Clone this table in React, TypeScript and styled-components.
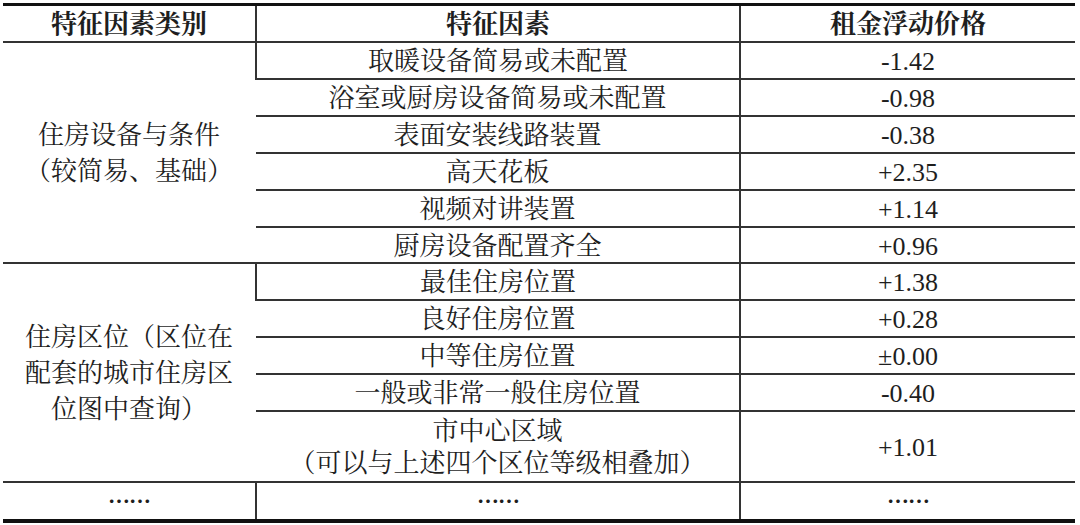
import React from "react";
import styled, { createGlobalStyle } from "styled-components";

const GlobalStyle = createGlobalStyle`
  html, body {
    margin: 0;
    padding: 0;
    background: #ffffff;
  }
`;

const Page = styled.div`
  width: 1080px;
  height: 525px;
  padding: 3px 0 0 3px;
  box-sizing: border-box;
  background: #fff;
  font-family: "Liberation Serif", "Noto Serif CJK SC", "Noto Sans CJK SC", serif;
  color: #1e1e1e;
`;

const Table = styled.table`
  border-collapse: collapse;
  table-layout: fixed;
  width: 1072px;
  border-top: 3px solid #111;
  border-bottom: 4px solid #111;
`;

const Cell = styled.td<{ $h?: number; $bold?: boolean; $lh?: number }>`
  height: ${(p) => p.$h ?? 37}px;
  padding: 4px 0 0;
  text-align: center;
  vertical-align: middle;
  font-size: 26px;
  line-height: ${(p) => p.$lh ?? 24}px;
  font-weight: ${(p) => (p.$bold ? 700 : 400)};
  border: 2px solid #333;
  border-left: none;
  border-right: none;
  box-sizing: border-box;
  white-space: nowrap;

  & + & {
    border-left: 2px solid #333;
  }
`;

const HeadCell = styled(Cell).attrs({ as: "th" })``;

const Dots = styled.span`
  font-family: "Noto Sans CJK SC", sans-serif;
  font-size: 22px;
  font-weight: 700;
  letter-spacing: -1px;
  vertical-align: 6px;
`;

type Row = { factor: React.ReactNode; value: string; h?: number; lh?: number };

const groups: { label: React.ReactNode; rows: Row[] }[] = [
  {
    label: (
      <>
        住房设备与条件
        <br />
        （较简易、基础）
      </>
    ),
    rows: [
      { factor: "取暖设备简易或未配置", value: "-1.42" },
      { factor: "浴室或厨房设备简易或未配置", value: "-0.98" },
      { factor: "表面安装线路装置", value: "-0.38" },
      { factor: "高天花板", value: "+2.35" },
      { factor: "视频对讲装置", value: "+1.14" },
      { factor: "厨房设备配置齐全", value: "+0.96", h: 36 },
    ],
  },
  {
    label: (
      <>
        住房区位（区位在
        <br />
        配套的城市住房区
        <br />
        位图中查询）
      </>
    ),
    rows: [
      { factor: "最佳住房位置", value: "+1.38" },
      { factor: "良好住房位置", value: "+0.28" },
      { factor: "中等住房位置", value: "±0.00" },
      { factor: "一般或非常一般住房位置", value: "-0.40" },
      {
        factor: (
          <>
            市中心区域
            <br />
            （可以与上述四个区位等级相叠加）
          </>
        ),
        value: "+1.01",
        h: 71,
        lh: 32,
      },
    ],
  },
];

export default function App() {
  return (
    <>
      <GlobalStyle />
      <Page>
        <Table>
          <colgroup>
            <col style={{ width: 253 }} />
            <col style={{ width: 484 }} />
            <col style={{ width: 335 }} />
          </colgroup>
          <thead>
            <tr>
              <HeadCell $h={37} $bold>特征因素类别</HeadCell>
              <HeadCell $h={37} $bold>特征因素</HeadCell>
              <HeadCell $h={37} $bold>租金浮动价格</HeadCell>
            </tr>
          </thead>
          <tbody>
            {groups.map((g, gi) =>
              g.rows.map((r, ri) => (
                <tr key={`${gi}-${ri}`}>
                  {ri === 0 && (
                    <Cell rowSpan={g.rows.length} $lh={36}>
                      {g.label}
                    </Cell>
                  )}
                  <Cell $h={r.h} $lh={r.lh}>{r.factor}</Cell>
                  <Cell $h={r.h}>{r.value}</Cell>
                </tr>
              ))
            )}
            <tr>
              <Cell $h={36}><Dots>⋯⋯</Dots></Cell>
              <Cell $h={36}><Dots>⋯⋯</Dots></Cell>
              <Cell $h={36}><Dots>⋯⋯</Dots></Cell>
            </tr>
          </tbody>
        </Table>
      </Page>
    </>
  );
}
